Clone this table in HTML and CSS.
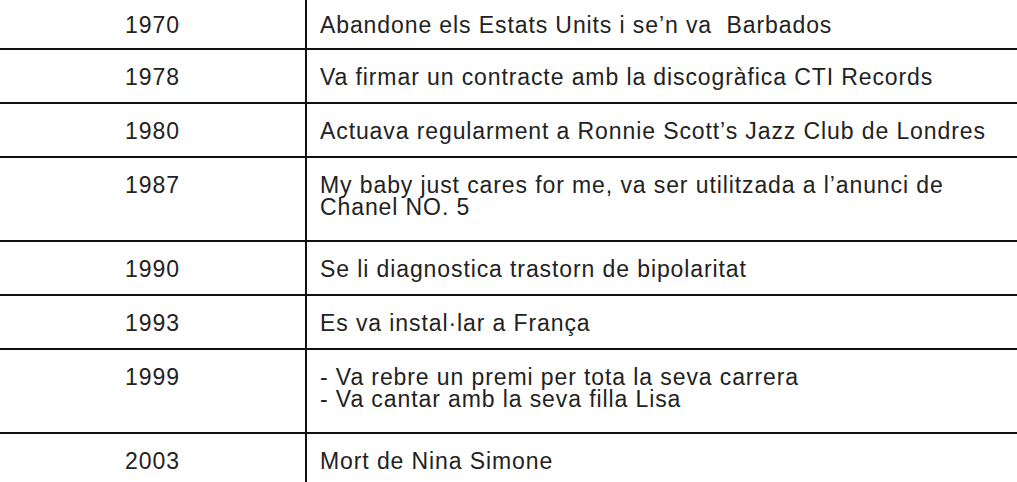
FILE: index.html
```html
<!DOCTYPE html>
<html lang="ca">
<head>
<meta charset="utf-8">
<link rel="stylesheet" href="styles.css">
</head>
<body>
<table class="timeline">
  <tbody>
    <tr class="first"><td class="year">1970</td><td class="event">Abandone els Estats Units i se’n va&nbsp; Barbados</td></tr>
    <tr><td class="year">1978</td><td class="event">Va firmar un contracte amb la discogràfica CTI Records</td></tr>
    <tr><td class="year">1980</td><td class="event">Actuava regularment a Ronnie Scott’s Jazz Club de Londres</td></tr>
    <tr class="multi"><td class="year">1987</td><td class="event">My baby just cares for me, va ser utilitzada a l’anunci de<br>Chanel NO. 5</td></tr>
    <tr><td class="year">1990</td><td class="event">Se li diagnostica trastorn de bipolaritat</td></tr>
    <tr><td class="year">1993</td><td class="event">Es va instal·lar a França</td></tr>
    <tr class="multi"><td class="year">1999</td><td class="event">- Va rebre un premi per tota la seva carrera<br>- Va cantar amb la seva filla Lisa</td></tr>
    <tr class="last"><td class="year">2003</td><td class="event">Mort de Nina Simone</td></tr>
  </tbody>
</table>
</body>
</html>
```

FILE: styles.css
```css
html, body {
  margin: 0;
  padding: 0;
  background: #ffffff;
}

body {
  font-family: "Liberation Sans", Arial, sans-serif;
  color: #222222;
  font-size: 23px;
  letter-spacing: 0.9px;
}

.timeline {
  width: 100%;
  border-collapse: collapse;
  table-layout: fixed;
}

.timeline td {
  padding: 16px 13px 14px 13px;
  line-height: 22px;
  vertical-align: top;
  white-space: nowrap;
  border-bottom: 2px solid #111111;
}

.timeline .year {
  width: 279px;
  text-align: center;
  border-right: 2px solid #111111;
}

.timeline .event {
  text-align: left;
}

.timeline .first td {
  padding-top: 14px;
  padding-bottom: 12px;
}

.timeline .multi td {
  padding-bottom: 22px;
}

.timeline .last td {
  border-bottom: none;
}
```
